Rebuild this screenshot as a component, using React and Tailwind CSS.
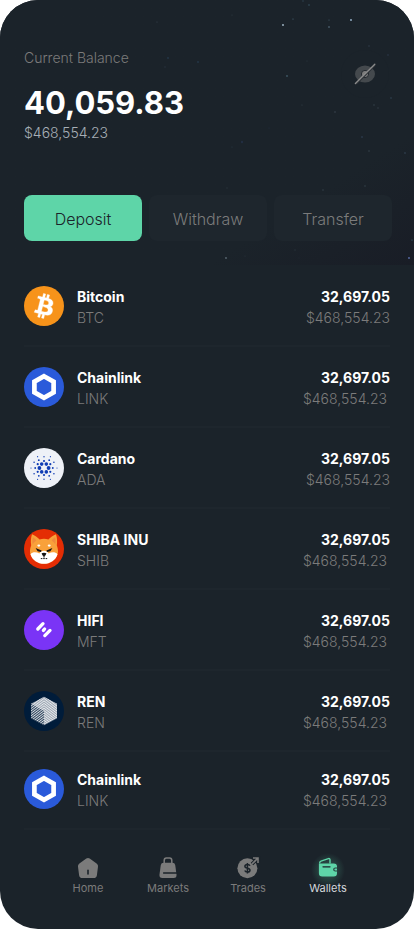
import React from "react";

const STARS = [
  [283, 25, 0.9, "#a9bfd0"], [351, 20, 0.9, "#9db9d2"], [329, 27, 0.7, "#6f8da5"], [293, 19, 0.6, "#4e6a7c"],
  [329, 20, 0.5, "#4e6a7c"], [309, 5, 0.9, "#2f4350"], [303, 1, 0.8, "#2f4350"], [287, 76, 0.9, "#3f5866"],
  [369, 46, 0.8, "#2f3d49"], [388, 55, 0.8, "#2c3a4c"], [307, 61, 0.6, "#2f3a42"], [302, 105, 0.6, "#34404a"],
  [335, 112, 0.8, "#3a4650"], [374, 105, 0.8, "#34404a"], [378, 108, 0.7, "#36424c"], [391, 98, 0.9, "#2b3946"],
  [362, 137, 0.8, "#33455c"], [369, 151, 0.7, "#3c4854"], [405, 153, 0.8, "#36475a"], [242, 142, 1.2, "#222f42"],
  [232, 147, 0.6, "#2b3a44"], [168, 58, 0.9, "#24384a"], [198, 62, 0.9, "#24384a"], [157, 22, 0.6, "#3a4650"],
  [165, 67, 0.7, "#2a3743"], [232, 15, 0.5, "#34404a"], [365, 186, 0.8, "#34404a"], [323, 190, 0.8, "#34404a"],
  [227, 188, 0.7, "#2b353e"], [226, 258, 0.9, "#5a6872"], [245, 256, 0.5, "#2f3943"], [295, 250, 0.7, "#2b353e"],
  [409, 258, 0.9, "#5b6fae"], [412, 240, 0.6, "#3f6a7c"], [299, 258, 0.4, "#2b353e"], [269, 128, 0.6, "#222f42"],
];

function StarField() {
  return (
    <svg aria-hidden="true" viewBox="0 0 414 265" preserveAspectRatio="xMaxYMin slice" className="absolute inset-0 h-full w-full">
      {STARS.map(([x, y, r, c]) => (
        <circle key={`${x}-${y}`} cx={x} cy={y} r={r} fill={c} />
      ))}
    </svg>
  );
}

function Bitcoin() {
  return (
    <svg viewBox="0 0 32 32" className="size-10 shrink-0" aria-hidden="true">
      <circle cx="16" cy="16" r="16" fill="#f7931a" />
      <path
        fill="#fff"
        stroke="#fff"
        strokeWidth=".3"
        d="M23.189 14.02c.314-2.096-1.283-3.223-3.465-3.975l.708-2.84-1.728-.43-.69 2.765c-.454-.114-.92-.22-1.385-.326l.695-2.783L15.596 6l-.708 2.839c-.376-.086-.746-.17-1.104-.26l.002-.009-2.384-.595-.46 1.846s1.283.294 1.256.312c.7.175.826.638.805 1.006l-.806 3.235c.048.012.11.03.18.057l-.183-.045-1.13 4.532c-.086.212-.303.531-.793.41.018.025-1.256-.313-1.256-.313l-.858 1.978 2.25.561c.418.105.828.215 1.231.318l-.715 2.872 1.727.43.708-2.84c.472.127.93.245 1.378.357l-.706 2.828 1.728.43.715-2.866c2.948.558 5.164.333 6.097-2.333.752-2.146-.037-3.385-1.588-4.192 1.13-.26 1.98-1.003 2.207-2.538zm-3.95 5.538c-.533 2.147-4.148.986-5.32.695l.95-3.805c1.172.293 4.929.872 4.37 3.11zm.535-5.569c-.487 1.953-3.495.96-4.47.717l.86-3.45c.975.243 4.118.696 3.61 2.733z"
      />
    </svg>
  );
}

function Chainlink() {
  return (
    <svg viewBox="0 0 40 40" className="size-10 shrink-0" aria-hidden="true">
      <circle cx="20" cy="20" r="20" fill="#2a5ada" />
      <path d="M20 9.3 29.6 14.7V25.3L20 30.7 10.4 25.3V14.7Z" fill="none" stroke="#fff" strokeWidth="4.7" />
    </svg>
  );
}

const ADA_DOTS = [
  [15.4, 20, 1.9], [24.6, 20, 1.9], [17.7, 16.1, 1.8], [22.3, 16.1, 1.8], [17.7, 23.9, 1.8], [22.3, 23.9, 1.8],
  [20, 13, 1.1], [20, 27, 1.1], [13.7, 16.2, 1.1], [26.3, 16.2, 1.1], [13.7, 23.8, 1.1], [26.3, 23.8, 1.1],
  [14.8, 12.2, 0.9], [25.2, 12.2, 0.9], [14.8, 27.8, 0.9], [25.2, 27.8, 0.9], [11.2, 20, 0.9], [28.8, 20, 0.9],
  [20, 8.7, 0.7], [20, 31.3, 0.7], [10.1, 14.2, 0.8], [29.9, 14.2, 0.8], [10.1, 25.8, 0.8], [29.9, 25.8, 0.8],
  [7, 20, 0.6], [33, 20, 0.6], [13.6, 8.7, 0.6], [26.4, 8.7, 0.6], [13.6, 31.3, 0.6], [26.4, 31.3, 0.6],
];

function Cardano() {
  return (
    <svg viewBox="0 0 40 40" className="size-10 shrink-0" aria-hidden="true">
      <circle cx="20" cy="20" r="20" fill="#eef1f7" />
      {ADA_DOTS.map(([x, y, r]) => (
        <circle key={`${x}-${y}`} cx={x} cy={y} r={r} fill="#0f3cb4" />
      ))}
    </svg>
  );
}

function Shiba() {
  return (
    <svg viewBox="0 0 40 40" className="size-10 shrink-0" aria-hidden="true">
      <circle cx="20" cy="20" r="20" fill="#e42d04" />
      <path fill="#f9a13a" d="M8 5.2C10.6 6.4 13.8 8.6 15.6 10.4Q20 9.2 24.4 10.4C26.2 8.6 29.4 6.4 32 5.2 33.2 8.6 33.4 13 32.8 16.2 34.2 20 34.4 23 33.4 26 31.6 31 26 34.8 20 34.8S8.4 31 6.6 26C5.6 23 5.8 20 7.2 16.2 6.6 13 6.8 8.6 8 5.2Z" />
      <path fill="#f08c3c" d="M9 8.2C10.4 9.2 11.6 10.4 12.4 11.6 10.8 12.8 9.6 14 8.8 15.6 8.2 13 8.2 10.6 9 8.2ZM31 8.2C29.6 9.2 28.4 10.4 27.6 11.6 29.2 12.8 30.4 14 31.2 15.6 31.8 13 31.8 10.6 31 8.2Z" />
      <path fill="#fff" d="M6.5 25.2C8.6 22.6 12.4 22.8 15.4 24.4 16.4 22.6 18 21.8 20 21.8S23.6 22.6 24.6 24.4C27.6 22.8 31.4 22.6 33.5 25.2 32 31 26 34.8 20 34.8S8 31 6.5 25.2Z" />
      <ellipse cx="14.8" cy="16.6" rx="1.5" ry="1.1" fill="#fff" />
      <ellipse cx="25.2" cy="16.6" rx="1.5" ry="1.1" fill="#fff" />
      <path d="M11.6 19 17.6 21.4 17 23 13.6 22.2ZM28.4 19 22.4 21.4 23 23 26.4 22.2Z" fill="#111" />
      <path d="M17.6 24.2Q20 23.2 22.4 24.2 22 26.6 20 27.4 18 26.6 17.6 24.2Z" fill="#111" />
      <path d="M20 27v2.2M16.8 29.6h6.4" fill="none" stroke="#111" strokeWidth="1" strokeDasharray="1.6 .8" />
    </svg>
  );
}

function Hifi() {
  return (
    <svg viewBox="0 0 40 40" className="size-10 shrink-0" aria-hidden="true">
      <circle cx="20" cy="20" r="20" fill="#7a34f6" />
      <path d="M13.8 19 19 13.7M20.8 25.6 26 20.4M19.4 20.4 20.6 19" stroke="#fff" strokeWidth="3.3" strokeLinecap="round" />
    </svg>
  );
}

function Ren() {
  const rows = Array.from({ length: 24 }, (_, i) => i * 1.7 - 8);
  return (
    <svg viewBox="0 0 40 40" className="size-10 shrink-0" aria-hidden="true">
      <defs>
        <clipPath id="ren-hex">
          <path d="M20 5.8 33 12.8V27.2L20 34.2 7 27.2V12.8Z" />
        </clipPath>
      </defs>
      <circle cx="20" cy="20" r="20" fill="#001c3a" />
      <g clipPath="url(#ren-hex)" fill="none">
        <path d="M20 5.8 33 12.8V27.2L20 34.2Z" fill="#8995a4" />
        <path d="M20 5.8 7 12.8 20 20 33 12.8Z" fill="#8995a4" />
        {rows.map((y) => (
          <path key={y} d={`M7 ${y}L20 ${y + 7}L33 ${y}`} stroke="#f1f3f5" strokeWidth=".9" />
        ))}
      </g>
    </svg>
  );
}

const ASSETS = [
  { name: "Bitcoin", code: "BTC", Logo: Bitcoin },
  { name: "Chainlink", code: "LINK", Logo: Chainlink, inset: true },
  { name: "Cardano", code: "ADA", Logo: Cardano },
  { name: "SHIBA INU", code: "SHIB", Logo: Shiba, inset: true },
  { name: "HIFI", code: "MFT", Logo: Hifi, inset: true },
  { name: "REN", code: "REN", Logo: Ren, inset: true },
  { name: "Chainlink", code: "LINK", Logo: Chainlink, inset: true, last: true },
];

function AssetRow({ name, code, Logo, inset, last }) {
  return (
    <li className={`flex items-center gap-[13px] border-b-2 border-[#1e262d] ${last ? "h-[78px] pb-0.5" : "h-[81px]"}`}>
      <Logo />
      <div className="flex-1 pt-0.5">
        <p className="text-sm/[21px] font-bold text-white">{name}</p>
        <p className="text-sm/[21px] font-light text-[#7b7b7b]">{code}</p>
      </div>
      <div className="pt-0.5 text-right">
        <p className="text-sm/[21px] font-bold text-white">32,697.05</p>
        <p className={`text-sm/[21px] font-light text-[#7b7b7b] ${inset ? "pr-[3px]" : ""}`}>$468,554.23</p>
      </div>
    </li>
  );
}

function HomeIcon() {
  return (
    <svg viewBox="0 0 22 22" className="size-[22px]" aria-hidden="true">
      <path fill="#7b7b7b" d="M9.3 1.6Q11 .4 12.7 1.6L19.6 6.4Q21.4 7.8 21 9.8L19.9 18.2Q19.5 21 16.8 21H5.2Q2.5 21 2.1 18.2L1 9.8Q.6 7.8 2.4 6.4Z" />
      <path d="M11 13.4v3.6" stroke="#1b232a" strokeWidth="1.6" strokeLinecap="round" />
    </svg>
  );
}

function MarketsIcon() {
  return (
    <svg viewBox="0 0 22 22" className="size-[22px]" aria-hidden="true">
      <path d="M7.2 7V3.4Q7.2 1 9.4 1h3.2q2.2 0 2.2 2.4V7" fill="none" stroke="#7b7b7b" strokeWidth="1.5" />
      <path fill="#7b7b7b" d="M6.6 5.8h8.8q2.4 0 2.8 2.3l1.3 9.4Q19.9 21 16.6 21H5.4Q2.1 21 2.5 17.5L3.8 8.1Q4.2 5.8 6.6 5.8Z" />
      <path d="M6.6 16h13" stroke="#1b232a" strokeWidth="1.5" strokeLinecap="round" />
    </svg>
  );
}

function TradesIcon() {
  return (
    <svg viewBox="0 0 22 22" className="size-[22px] overflow-visible" aria-hidden="true">
      <circle cx="10.4" cy="11.2" r="10" fill="#7b7b7b" />
      <path d="M13 8.8Q12.4 7.5 10.4 7.5 7.9 7.5 7.9 9.3 7.9 10.8 10.4 11.2 13 11.6 13 13.2 13 15 10.4 15 8.3 15 7.8 13.5M10.4 6v10.4" fill="none" stroke="#1b232a" strokeWidth="1.5" />
      <path d="M15 7 21.2.8M16.4.8h5v5" fill="none" stroke="#1b232a" strokeWidth="3.6" />
      <path d="M15 7 21 1M16 1h5v5" fill="none" stroke="#7b7b7b" strokeWidth="1.6" />
    </svg>
  );
}

function WalletIcon() {
  return (
    <svg viewBox="0 0 22 22" className="size-[22px] overflow-visible" aria-hidden="true">
      <defs>
        <radialGradient id="wallet-glow">
          <stop offset="0" stopColor="#5ed5a8" stopOpacity=".35" />
          <stop offset="1" stopColor="#5ed5a8" stopOpacity="0" />
        </radialGradient>
      </defs>
      <circle cx="11" cy="13" r="17" fill="url(#wallet-glow)" />
      <path d="M2.6 6.4Q2.6 4.8 4 4.2L11.4 1.6Q13 1.2 13 2.8V6.4" fill="none" stroke="#5ed5a8" strokeWidth="1.4" />
      <path fill="#5ed5a8" d="M1.9 6.4h14.8Q20 6.4 20 9.4v1h-1.7q-2.2 0-2.2 2t2.2 2H20v1.8q0 3.2-3.3 3.2H5.2Q1.9 19.4 1.9 16.2Z" />
      <path fill="#5ed5a8" d="M18.4 11.4H20v2h-1.6q-1 0-1-1t1-1Z" />
      <path d="M6 9.8h7" stroke="#1b232a" strokeWidth="1.3" strokeLinecap="round" />
    </svg>
  );
}

const TABS = [
  { label: "Home", Icon: HomeIcon },
  { label: "Markets", Icon: MarketsIcon },
  { label: "Trades", Icon: TradesIcon },
  { label: "Wallets", Icon: WalletIcon, active: true },
];

export default function App() {
  return (
    <div className="min-h-screen bg-white font-['Inter','Liberation_Sans',sans-serif]">
      <div className="flex min-h-screen flex-col overflow-hidden rounded-[38px] bg-[#1b232a]">
        <header className="relative bg-linear-to-br from-[#1b232a] from-75% to-[#191d26] pt-[47px] pr-[22px] pb-6 pl-6">
          <StarField />
          <div className="relative flex items-start justify-between">
            <div>
              <p className="text-sm/[21px] font-light text-[#7b7b7b]">Current Balance</p>
              <h1 className="mt-4 text-[31px]/[38px] font-bold text-white">40,059.83</h1>
              <p className="text-sm/[21px] font-light text-[#a7afb7]">$468,554.23</p>
            </div>
            <button type="button" aria-label="Hide balance" className="mt-[3px] mr-[3px] flex size-12 items-center justify-center rounded-full bg-[#1b232a]">
              <svg viewBox="0 0 24 24" className="size-6" aria-hidden="true">
                <ellipse cx="12" cy="12" rx="10" ry="8.6" fill="#44494d" />
                <circle cx="12" cy="12" r="3.6" fill="#7b7b7b" stroke="#23292f" strokeWidth="1" />
                <path d="M3.4 22 22.2 3.2" stroke="#2b3136" strokeWidth="1.4" />
                <path d="M2.4 21.6 21.8 2.2" stroke="#8b8b8b" strokeWidth="1.4" strokeLinecap="round" />
              </svg>
            </button>
          </div>
          <div className="relative mt-[52px] flex gap-[7px]">
            <button type="button" className="h-[46px] flex-1 rounded-lg bg-[#5ed5a8] pt-0.5 text-base font-light text-[#1b232a]">Deposit</button>
            <button type="button" className="h-[46px] flex-1 rounded-lg bg-[#1e262d] pt-0.5 text-base font-light text-[#7b7b7b]">Withdraw</button>
            <button type="button" className="h-[46px] flex-1 rounded-lg bg-[#1e262d] pt-0.5 text-base font-light text-[#7b7b7b]">Transfer</button>
          </div>
        </header>

        <main className="flex-1 pt-px">
          <ul className="pr-6 pl-6">
            {ASSETS.map((asset, i) => (
              <AssetRow key={i} {...asset} />
            ))}
          </ul>
        </main>

        <nav aria-label="Main" className="flex h-[99px] items-start pt-[27px] pr-[46px] pl-12">
          {TABS.map(({ label, Icon, active }) => (
            <a key={label} href="#" aria-current={active ? "page" : undefined} className="flex flex-1 flex-col items-center">
              <Icon />
              <span className={`text-[11px]/[18px] ${active ? "text-[#d3d7da]" : "text-[#7b7b7b]"}`}>{label}</span>
            </a>
          ))}
        </nav>
      </div>
    </div>
  );
}
